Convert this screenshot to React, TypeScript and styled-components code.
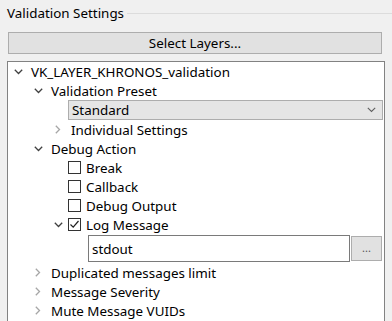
import React from 'react'
import styled, { createGlobalStyle } from 'styled-components'

const GlobalStyle = createGlobalStyle`
  html, body {
    margin: 0;
    padding: 0;
    background: #f0f0f0;
    overflow: hidden;
  }
  body {
    font-family: "Noto Sans", "Liberation Sans", Arial, sans-serif;
    font-size: 13.4px;
    color: #000;
  }
`

const Page = styled.div`
  width: 392px;
  height: 321px;
  overflow: hidden;
  display: flex;
  flex-direction: column;
  & > * {
    flex-shrink: 0;
  }
`

const Legend = styled.div`
  display: flex;
  align-items: center;
  height: 26px;
  padding-left: 7px;
`

const LegendTitle = styled.span`
  line-height: 14px;
  padding-right: 3px;
  margin-top: -1px;
`

const LegendLine = styled.div`
  flex: 1;
  height: 0;
  border-top: 1px solid #dcdcdc;
`

const SelectButton = styled.button`
  margin: 6px 10px 0 8px;
  height: 22px;
  background: #e1e1e1;
  border: 1px solid #adadad;
  font: inherit;
  color: #000;
  padding: 0;
`

const Tree = styled.div`
  margin: 7px 7px 0 7px;
  height: 300px;
  background: #fff;
  border: 1px solid #828282;
  display: flex;
  flex-direction: column;
`

const Row = styled.div<{ $level: number; $height?: number }>`
  display: flex;
  align-items: center;
  height: ${p => p.$height ?? 19}px;
  flex-shrink: 0;
  padding-left: ${p => p.$level * 20}px;
  padding-right: 1px;
  box-sizing: border-box;
`

const Branch = styled.span`
  width: 20px;
  flex-shrink: 0;
  display: flex;
  align-items: center;
  justify-content: center;
`

const Label = styled.span`
  padding-left: 3px;
  white-space: nowrap;
`

const Check = styled.span`
  width: 13px;
  height: 13px;
  box-sizing: border-box;
  border: 1px solid #333;
  background: #fff;
  flex-shrink: 0;
  display: flex;
  align-items: center;
  justify-content: center;
  margin-right: 2px;
`

const Combo = styled.div`
  flex: 1;
  height: 20px;
  box-sizing: border-box;
  background: #e5e5e5;
  border: 1px solid #adadad;
  display: flex;
  align-items: center;
  justify-content: space-between;
  padding: 0 6px 0 3px;
`

const TextInput = styled.div`
  flex: 1;
  height: 27px;
  box-sizing: border-box;
  border: 1px solid #7a7a7a;
  background: #fff;
  display: flex;
  align-items: center;
  padding-left: 3px;
`

const DotsButton = styled.div`
  width: 31px;
  height: 25px;
  margin: 0 1px 0 1px;
  box-sizing: border-box;
  background: #e1e1e1;
  border: 1px solid #adadad;
  color: #555;
  display: flex;
  align-items: center;
  justify-content: center;
  font-size: 11px;
  padding-bottom: 3px;
`

const Open = () => (
  <svg width="9" height="6" viewBox="0 0 9 6">
    <polyline points="0.8,0.8 4.5,4.5 8.2,0.8" fill="none" stroke="#404040" strokeWidth="1.3" />
  </svg>
)

const Closed = () => (
  <svg width="6" height="9" viewBox="0 0 6 9">
    <polyline points="0.8,0.8 4.5,4.5 0.8,8.2" fill="none" stroke="#a6a6a6" strokeWidth="1.3" />
  </svg>
)

const Tick = () => (
  <svg width="11" height="11" viewBox="0 0 11 11">
    <polyline points="1.5,5.5 4.2,8.2 9.5,2" fill="none" stroke="#222" strokeWidth="1.2" />
  </svg>
)

const ComboArrow = () => (
  <svg width="9" height="6" viewBox="0 0 9 6">
    <polyline points="0.8,0.8 4.5,4.5 8.2,0.8" fill="none" stroke="#606060" strokeWidth="1.1" />
  </svg>
)

const Node = ({ level, open, label }: { level: number; open?: boolean; label: string }) => (
  <Row $level={level}>
    <Branch>{open === undefined ? null : open ? <Open /> : <Closed />}</Branch>
    <Label>{label}</Label>
  </Row>
)

const CheckNode = ({ label, checked, open }: { label: string; checked?: boolean; open?: boolean }) => (
  <Row $level={2}>
    <Branch>{open ? <Open /> : null}</Branch>
    <Check>{checked ? <Tick /> : null}</Check>
    <Label>{label}</Label>
  </Row>
)

export default function App() {
  return (
    <Page>
      <GlobalStyle />
      <Legend>
        <LegendTitle>Validation Settings</LegendTitle>
        <LegendLine />
      </Legend>
      <SelectButton>Select Layers...</SelectButton>
      <Tree>
        <Node level={0} open label="VK_LAYER_KHRONOS_validation" />
        <Node level={1} open label="Validation Preset" />
        <Row $level={2} $height={20}>
          <Branch />
          <Combo>
            <span>Standard</span>
            <ComboArrow />
          </Combo>
        </Row>
        <Node level={2} open={false} label="Individual Settings" />
        <Node level={1} open label="Debug Action" />
        <CheckNode label="Break" />
        <CheckNode label="Callback" />
        <CheckNode label="Debug Output" />
        <CheckNode label="Log Message" checked open />
        <Row $level={3} $height={29}>
          <Branch />
          <TextInput>stdout</TextInput>
          <DotsButton>...</DotsButton>
        </Row>
        <Node level={1} open={false} label="Duplicated messages limit" />
        <Node level={1} open={false} label="Message Severity" />
        <Node level={1} open={false} label="Mute Message VUIDs" />
      </Tree>
    </Page>
  )
}
